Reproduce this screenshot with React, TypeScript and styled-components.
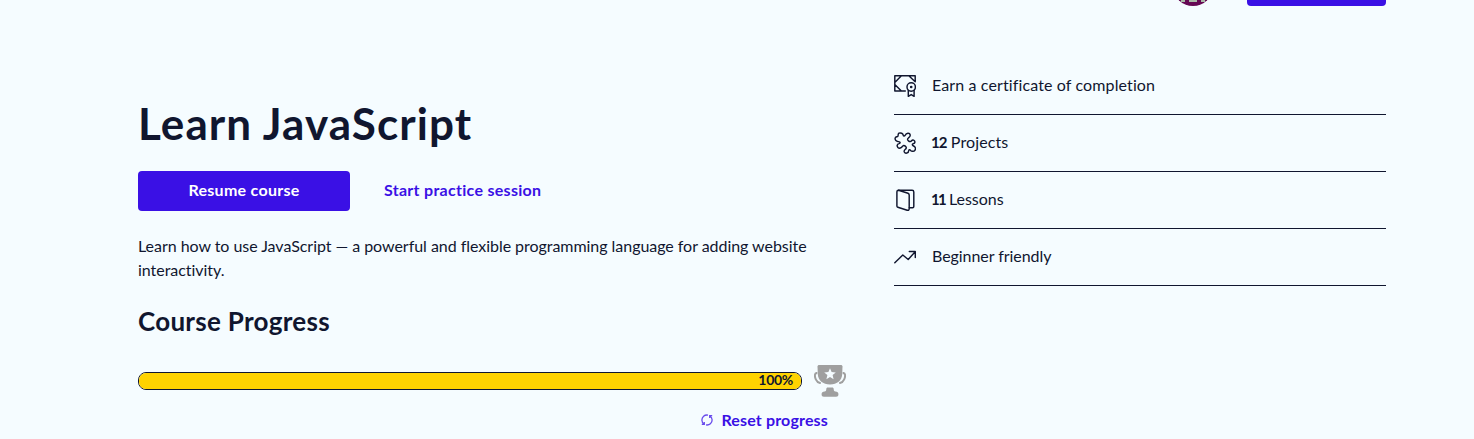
import React from 'react';
import styled, { createGlobalStyle } from 'styled-components';

const navy = '#10162f';
const violet = '#3a10e5';

const GlobalStyle = createGlobalStyle`
  * { box-sizing: border-box; }
  body {
    margin: 0;
    background: #f5fcff;
    color: ${navy};
    font: 400 16px/24px Lato, "Open Sans", sans-serif;
    overflow: hidden;
  }
`;

const Page = styled.div`
  height: 439px;
  padding: 0 88px 0 138px;
  overflow: hidden;
`;

const TopBar = styled.header`
  display: flex;
  justify-content: flex-end;
  align-items: flex-end;
  gap: 34px;
  height: 6px;
  overflow: hidden;
`;

const Avatar = styled.svg`
  display: block;
  flex: none;
  width: 40px;
  height: 40px;
`;

const TopAction = styled.div`
  flex: none;
  width: 139px;
  height: 40px;
  border-radius: 4px;
  background: ${violet};
`;

const Columns = styled.main`
  display: flex;
  justify-content: space-between;
`;

const Intro = styled.section`
  width: 708px;
  padding-top: 91px;
`;

const Title = styled.h1`
  margin: 0;
  font-size: 44px;
  font-weight: 700;
  line-height: 53px;
  letter-spacing: 1.1px;
  white-space: nowrap;
`;

const Actions = styled.div`
  display: flex;
  align-items: center;
  gap: 34px;
  margin-top: 21px;
`;

const ResumeButton = styled.button`
  width: 212px;
  height: 40px;
  padding: 0 0 2px;
  border: 0;
  border-radius: 4px;
  background: ${violet};
  color: #fff;
  font: inherit;
  font-weight: 700;
  letter-spacing: 0.28px;
`;

const TextButton = styled.button<{ $spacing: number }>`
  display: flex;
  align-items: center;
  gap: 8px;
  padding: 0 0 2px;
  border: 0;
  background: none;
  color: ${violet};
  font: inherit;
  font-weight: 700;
  letter-spacing: ${({ $spacing }) => $spacing}px;
  white-space: nowrap;
`;

const Description = styled.p`
  margin: 23px 0 0;
  width: 700px;
  letter-spacing: -0.04px;
`;

const Subtitle = styled.h2`
  margin: 23px 0 0;
  font-size: 26px;
  font-weight: 700;
  line-height: 32px;
  letter-spacing: 0.28px;
`;

const ProgressRow = styled.div`
  display: flex;
  align-items: center;
  gap: 12px;
  margin-top: 27px;
  height: 34px;
`;

const Track = styled.div`
  width: 664px;
  height: 18px;
  border: 1px solid ${navy};
  border-radius: 8px;
  background: #fff;
  overflow: hidden;
`;

const Fill = styled.div`
  height: 100%;
  padding-right: 8px;
  background: #ffd300;
  font-size: 14px;
  font-weight: 700;
  line-height: 13px;
  letter-spacing: -0.3px;
  text-align: right;
`;

const ResetRow = styled.div`
  display: flex;
  justify-content: flex-end;
  margin-top: 10px;
  padding-right: 18px;
`;

const Facts = styled.ul`
  width: 492px;
  margin: 0;
  padding: 52px 0 0;
  list-style: none;
`;

const Fact = styled.li<{ $spacing: number }>`
  display: flex;
  align-items: center;
  gap: 16px;
  height: 57px;
  border-bottom: 1px solid ${navy};
  letter-spacing: ${({ $spacing }) => $spacing}px;
`;

const FactText = styled.span`
  padding-bottom: 2px;
`;

const Count = styled.b<{ $spacing: number }>`
  margin-left: -1px;
  font-size: 15px;
  letter-spacing: ${({ $spacing }) => $spacing}px;
`;

const FactIcon = styled.svg`
  flex: none;
  width: 22px;
  height: 22px;
  fill: none;
  stroke: ${navy};
  stroke-width: 1.45;
  stroke-linejoin: round;
  stroke-linecap: round;
`;

const CertificateIcon = () => (
  <FactIcon viewBox="0 0 22 22">
    <path d="M11.3 16H.8V.8h20.4v6M.8 7.400 7.400.8M.8 9.400 7.400 16M14.800.8l6.400 6" />
    <circle cx="17.200" cy="12" r="4.200" />
    <circle cx="17.200" cy="12" r=".6" />
    <path d="M14.300 15.400v5.900l2.900-1.700 2.900 1.700v-5.900" />
  </FactIcon>
);

const PuzzleIcon = () => (
  <FactIcon viewBox="0 0 22 22">
    <path d="M4.700 1c1.900-.8 4.100.300 4.300 2 .1 1 1.200 1.100 1.800.3C12.200.300 15.600.400 16 2.700c.2 1.700-1 2.300-1.900 3.100-1.200 1-.8 2 .2 2.900 1.200 1.100 2.300.8 3.100-.2 1.100-1.400 3.200-.4 3.300 1.100.2 1.300-1 1.800-2 2-.9.400-.6 1.500.3 2 2.800.9 2.500 3.400 1.700 4.500-1 1.500-3.400 1.100-4.300.1-.7-.9-1.800-.7-1.900.3-.1 2.700-3.500 3.200-4.400 1.300-.6-1.500.5-2.200 1.300-2.900 1.200-1 .7-2.100-.3-3-1.200-1.100-2.100-.8-2.900.3-.9 1.700-3.200 2.400-4.500 1.100-1.600-1.800-.3-3.600 1.200-3.900 1.200-.3 1.300-1.500.3-1.700C1.900 9.400.300 7.600 1.100 5.600c.5-1.100 1.700-.9 2.500-1.500C4.200 3.500 3.500 1.700 4.700 1Z" transform="translate(.2 .2)" />
  </FactIcon>
);

const BookIcon = () => (
  <FactIcon viewBox="0 0 22 22">
    <path d="M4.5 1.2h13.6c1.1 0 1.7.6 1.7 1.7v14.7c0 .8-.5 1.2-1.2 1.2h-3.3" />
    <path d="M4.5 1.2c-1 0-1.6.6-1.6 1.5v14.2c0 .8.4 1.2 1 1.4l9.3 2.9c1.2.3 2-.2 2-1.4V6c0-.9-.4-1.4-1.2-1.7Z" />
  </FactIcon>
);

const TrendIcon = () => (
  <FactIcon viewBox="0 0 22 22">
    <path d="m.8 16.7 8-7.7 5.4 4.5 7-7.8M15.3 5.4h6v6.2" />
  </FactIcon>
);

const TrophyIcon = () => (
  <svg width="32" height="34" viewBox="0 0 32 34">
    <path
      fill="#9f9f9f"
      d="M5.2 1h21.6c1.1 0 1.7.6 1.7 1.6l-.3 7.6c-.4 6-5 10.3-12.2 10.3S4.200 16.200 3.800 10.200L3.500 2.600C3.500 1.600 4.100 1 5.200 1Z"
    />
    <path
      fill="none"
      stroke="#9f9f9f"
      strokeWidth="2"
      strokeLinecap="round"
      d="M2.600 9C.200 9.600.700 13 1.800 15.400c.8 1.800 2.200 3.200 4.200 3.600M29.400 9c2.400.600 1.900 4 .800 6.400-.8 1.800-2.200 3.200-4.200 3.600"
    />
    <path
      fill="#9f9f9f"
      d="M14 23.400h4c1.300 0 1.700.6 1.700 1.700 0 1.500.4 2.300 1.700 2.300 2 0 3 1 3 2.600v.600c0 1.400-.8 2.200-2.300 2.200H9.900c-1.500 0-2.300-.8-2.300-2.200V30c0-1.600 1-2.600 3-2.600 1.300 0 1.700-.8 1.700-2.300 0-1.100.4-1.700 1.700-1.700Z"
    />
    <path
      fill="#f5fcff"
      d="m16 4.200 1.600 3.900 4.200.300-3.200 2.700 1 4.100-3.600-2.200-3.600 2.200 1-4.100-3.200-2.700 4.200-.300Z"
    />
  </svg>
);

const ResetIcon = () => (
  <svg
    width="12"
    height="12"
    viewBox="0 0 12 12"
    fill="none"
    stroke={violet}
    strokeOpacity=".75"
    strokeWidth="1.3"
  >
    <path d="M7 1.100C3.500.500.800 3 .900 6.200c.1 1.600.800 2.900 2 3.900M.800 10.400h2.500V8M5 10.900c3.500.600 6.200-1.900 6.100-5.100-.1-1.600-.8-2.900-2-3.900M11.200 1.600H8.700V4" />
  </svg>
);

const App: React.FC = () => (
  <>
    <GlobalStyle />
    <Page>
      <TopBar>
        <Avatar viewBox="0 0 40 40">
          <circle cx="20" cy="20" r="20" fill="#650853" />
          <path fill="#a9b8a6" d="M16 28h8v8h-8zM8 30h4v6H8zM28 30h4v6h-4z" />
        </Avatar>
        <TopAction />
      </TopBar>
      <Columns>
        <Intro>
          <Title>Learn JavaScript</Title>
          <Actions>
            <ResumeButton>Resume course</ResumeButton>
            <TextButton $spacing={0.29}>Start practice session</TextButton>
          </Actions>
          <Description>
            Learn how to use JavaScript — a powerful and flexible programming language for adding
            website interactivity.
          </Description>
          <Subtitle>Course Progress</Subtitle>
          <ProgressRow>
            <Track>
              <Fill>100%</Fill>
            </Track>
            <TrophyIcon />
          </ProgressRow>
          <ResetRow>
            <TextButton $spacing={0.16}>
              <ResetIcon />
              Reset progress
            </TextButton>
          </ResetRow>
        </Intro>
        <Facts>
          <Fact $spacing={0.12}>
            <CertificateIcon />
            <FactText>Earn a certificate of completion</FactText>
          </Fact>
          <Fact $spacing={0.12}>
            <PuzzleIcon />
            <FactText>
              <Count $spacing={-0.9}>12</Count> Projects
            </FactText>
          </Fact>
          <Fact $spacing={-0.03}>
            <BookIcon />
            <FactText>
              <Count $spacing={-1.8}>11</Count> Lessons
            </FactText>
          </Fact>
          <Fact $spacing={-0.06}>
            <TrendIcon />
            <FactText>Beginner friendly</FactText>
          </Fact>
        </Facts>
      </Columns>
    </Page>
  </>
);

export default App;
